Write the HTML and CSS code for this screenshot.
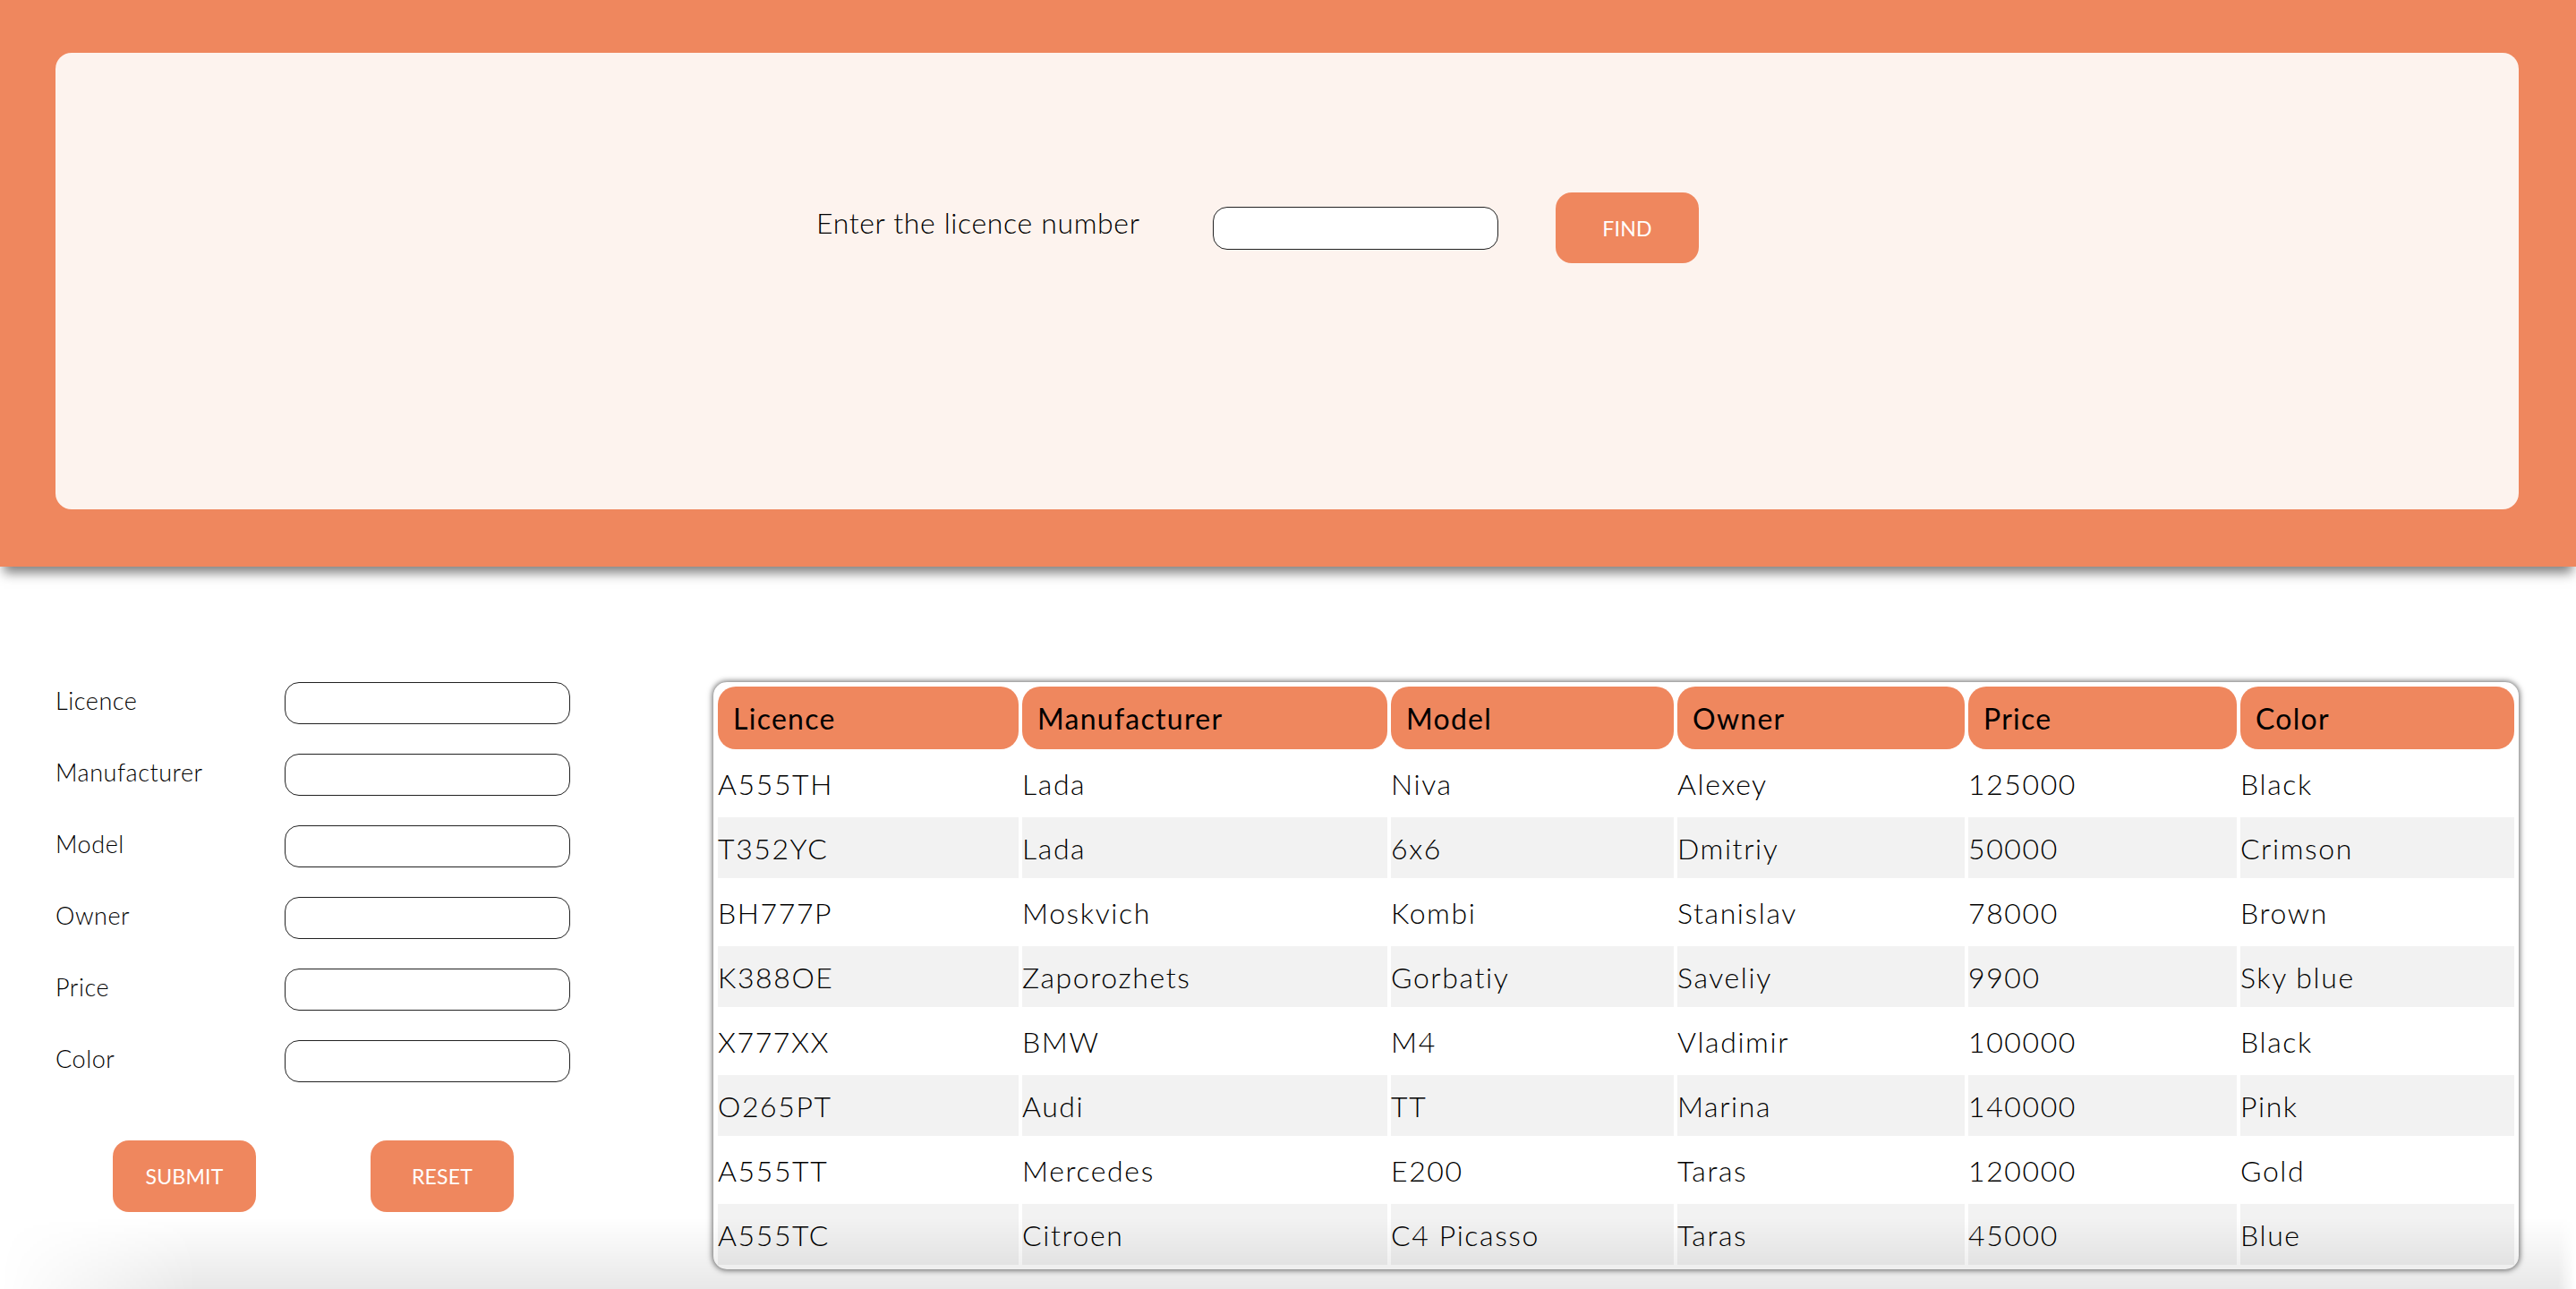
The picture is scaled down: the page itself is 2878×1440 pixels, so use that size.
FILE: index.html
```html
<!DOCTYPE html>
<html lang="en">
<head>
<meta charset="utf-8">
<title>Cars</title>
<link rel="stylesheet" href="styles.css">
</head>
<body>
<header class="top">
  <div class="search-panel">
    <div class="search-row">
      <label class="search-label" for="lic">Enter the licence number</label>
      <input class="field search-field" id="lic" type="text">
      <button class="btn btn-find" type="button">FIND</button>
    </div>
  </div>
</header>

<main class="content">
  <form class="car-form">
    <div class="form-grid">
      <label class="form-label">Licence</label><input class="field form-field" type="text">
      <label class="form-label">Manufacturer</label><input class="field form-field" type="text">
      <label class="form-label">Model</label><input class="field form-field" type="text">
      <label class="form-label">Owner</label><input class="field form-field" type="text">
      <label class="form-label">Price</label><input class="field form-field" type="text">
      <label class="form-label">Color</label><input class="field form-field" type="text">
    </div>
    <div class="form-actions">
      <button class="btn btn-action" type="button">SUBMIT</button>
      <button class="btn btn-action" type="reset">RESET</button>
    </div>
  </form>

  <div class="table-wrap">
    <table class="cars">
      <thead>
        <tr><th>Licence</th><th>Manufacturer</th><th>Model</th><th>Owner</th><th>Price</th><th>Color</th></tr>
      </thead>
      <tbody>
        <tr><td>A555TH</td><td>Lada</td><td>Niva</td><td>Alexey</td><td>125000</td><td>Black</td></tr>
        <tr><td>T352YC</td><td>Lada</td><td>6x6</td><td>Dmitriy</td><td>50000</td><td>Crimson</td></tr>
        <tr><td>BH777P</td><td>Moskvich</td><td>Kombi</td><td>Stanislav</td><td>78000</td><td>Brown</td></tr>
        <tr><td>K388OE</td><td>Zaporozhets</td><td>Gorbatiy</td><td>Saveliy</td><td>9900</td><td>Sky blue</td></tr>
        <tr><td>X777XX</td><td>BMW</td><td>M4</td><td>Vladimir</td><td>100000</td><td>Black</td></tr>
        <tr><td>O265PT</td><td>Audi</td><td>TT</td><td>Marina</td><td>140000</td><td>Pink</td></tr>
        <tr><td>A555TT</td><td>Mercedes</td><td>E200</td><td>Taras</td><td>120000</td><td>Gold</td></tr>
        <tr><td>A555TC</td><td>Citroen</td><td>C4 Picasso</td><td>Taras</td><td>45000</td><td>Blue</td></tr>
      </tbody>
    </table>
  </div>
</main>
<div class="bottom-shade"></div>
</body>
</html>
```

FILE: styles.css
```css
* { box-sizing: border-box; }

html, body {
  margin: 0;
  padding: 0;
  background: #ffffff;
}

body {
  position: relative;
  height: 1440px;
  overflow: hidden;
  font-family: "Lato", "Open Sans", sans-serif;
  font-weight: 300;
  color: #000;
}

/* ---------- header ---------- */
.top {
  height: 633px;
  background: #ef875e;
  padding: 59px 64px 0 62px;
  box-shadow: 0 11px 12px -4px rgba(0, 0, 0, 0.5);
  position: relative;
  z-index: 1;
}

.search-panel {
  height: 510px;
  background: #fdf3ee;
  border-radius: 18px;
  padding: 156px 0 0 850px;
}

.search-row {
  display: flex;
  align-items: center;
}

.search-label {
  width: 369px;
  margin-right: 74px;
  font-size: 32px;
  letter-spacing: 0.02em;
  white-space: nowrap;
  position: relative;
  top: -6px;
}

.field {
  border: 1px solid #222;
  border-radius: 16px;
  background: #fff;
  outline: none;
  font: inherit;
}

.search-field {
  width: 319px;
  height: 48px;
  margin-right: 64px;
}

.btn {
  border: none;
  background: #ef875e;
  color: #fff;
  border-radius: 18px;
  font-family: "Lato", "Open Sans", sans-serif;
  font-weight: 400;
  font-size: 23px;
  letter-spacing: 0.01em;
  cursor: pointer;
}

.btn-find {
  width: 160px;
  height: 79px;
}

/* ---------- main ---------- */
.content {
  display: flex;
  align-items: flex-start;
  padding: 129px 0 0 62px;
}

.car-form {
  width: 575px;
  flex: none;
}

.form-grid {
  display: grid;
  grid-template-columns: 256px 319px;
  grid-auto-rows: 47px;
  row-gap: 33px;
  align-items: center;
}

.form-label {
  font-size: 27px;
  letter-spacing: 0.02em;
  position: relative;
  top: -3px;
}

.form-field {
  width: 319px;
  height: 47px;
}

.form-actions {
  display: flex;
  gap: 128px;
  padding-left: 64px;
  margin-top: 65px;
}

.btn-action {
  width: 160px;
  height: 80px;
}

/* ---------- table ---------- */
.table-wrap {
  margin-left: 160px;
  width: 2017px;
  padding: 1px;
  border-radius: 15px;
  background: #fff;
  box-shadow: 0 0 6px 1px rgba(0, 0, 0, 0.6);
  flex: none;
}

.cars {
  width: 2015px;
  table-layout: fixed;
  border-collapse: separate;
  border-spacing: 4px;
}

.cars th,
.cars td {
  text-align: left;
  vertical-align: middle;
  font-size: 32px;
  letter-spacing: 0.05em;
  white-space: nowrap;
}

.cars th {
  height: 70px;
  padding: 0 17px;
  background: #ef875e;
  border-radius: 20px;
  font-weight: 400;
  letter-spacing: 0.04em;
}

.cars td {
  height: 68px;
  padding: 0;
}

.cars tbody tr:nth-child(even) td {
  background: #f2f2f2;
}

.cars th:nth-child(1) { width: 336px; }
.cars th:nth-child(2) { width: 408px; }
.cars th:nth-child(3) { width: 316px; }
.cars th:nth-child(4) { width: 321px; }
.cars th:nth-child(5) { width: 300px; }
.cars th:nth-child(6) { width: 306px; }

/* ---------- bottom shading ---------- */
.bottom-shade {
  position: absolute;
  left: 0;
  right: 0;
  bottom: 0;
  height: 80px;
  pointer-events: none;
  background: linear-gradient(to bottom, rgba(0, 0, 0, 0) 0%, rgba(0, 0, 0, 0.09) 100%);
  -webkit-mask-image: linear-gradient(to right, transparent 0, #000 220px, #000 calc(100% - 20px), transparent 100%);
  mask-image: linear-gradient(to right, transparent 0, #000 220px, #000 calc(100% - 20px), transparent 100%);
}
```
